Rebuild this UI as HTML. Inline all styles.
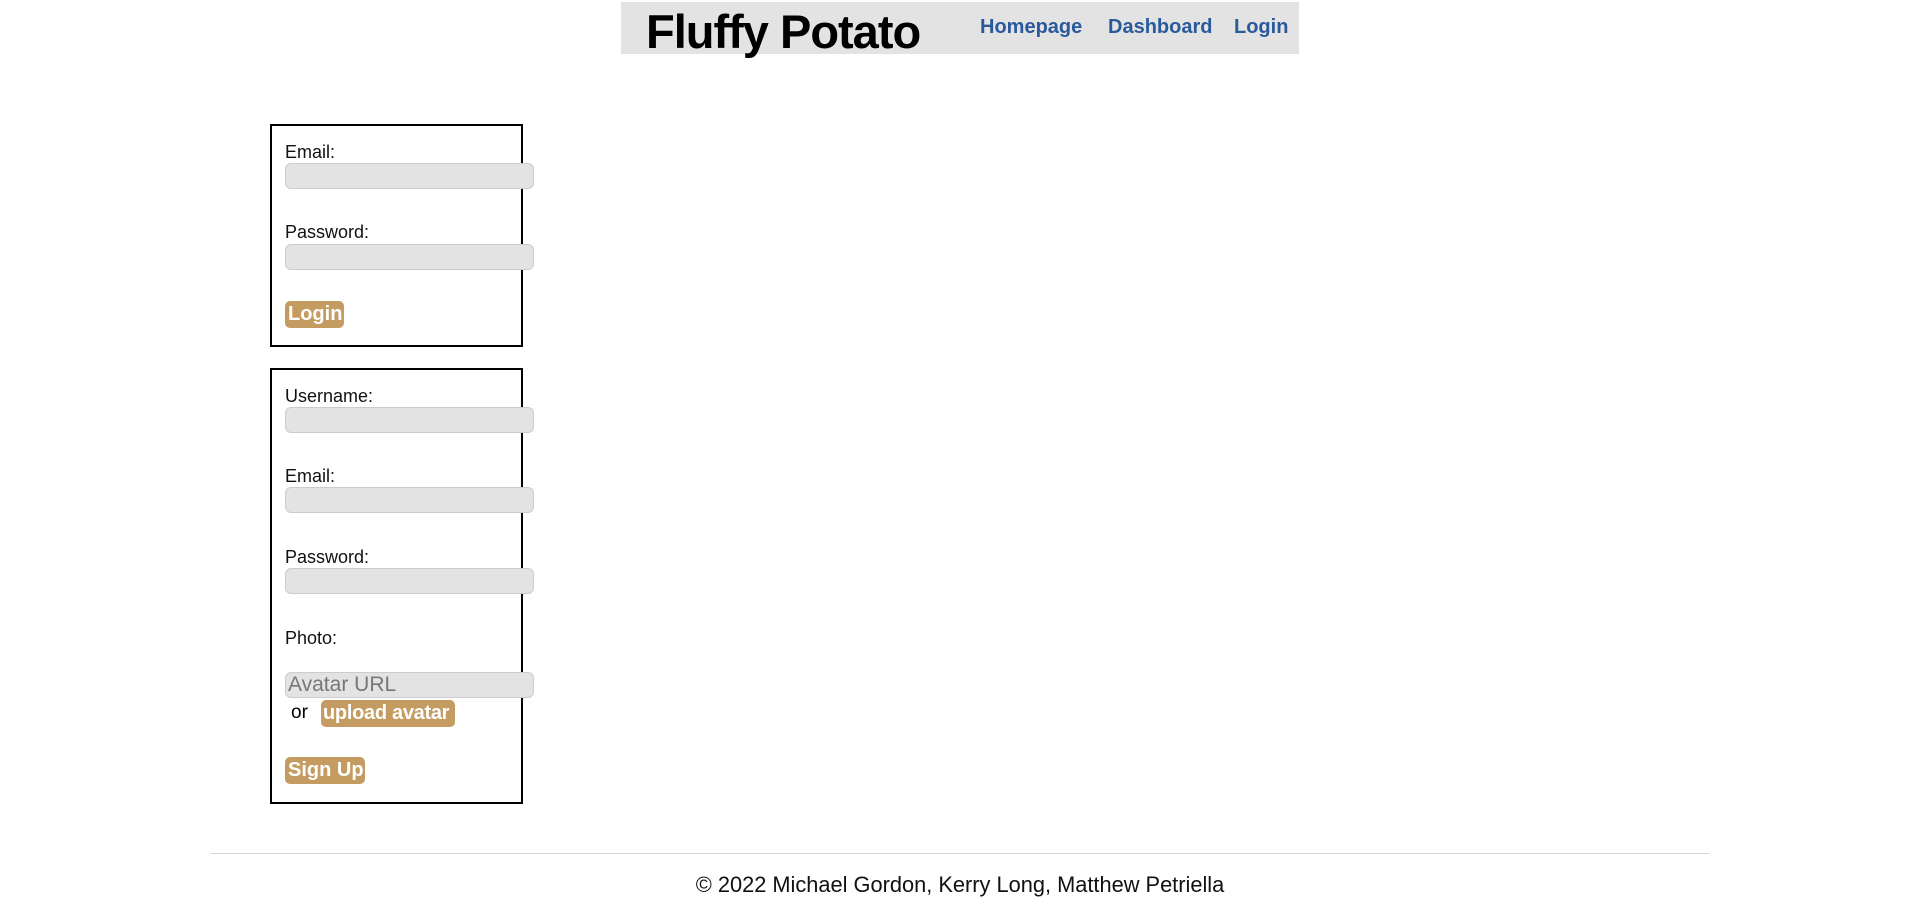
<!DOCTYPE html>
<html><head><meta charset="utf-8"><style>
body{margin:0;width:1920px;height:911px;background:#fff;font-family:"Liberation Sans",sans-serif;position:relative;overflow:hidden}
.a{position:absolute;white-space:nowrap}
.hdr{left:621px;top:2px;width:678px;height:52px;background:#e3e3e3}
.title{left:646px;top:2px;font-size:47px;font-weight:bold;line-height:60px;letter-spacing:-1px;color:#000}
.nav{top:14px;font-size:20px;font-weight:bold;color:#2a5a9c;line-height:26px}
.box{border:2px solid #000;left:270px;width:249px}
.lbl{left:285px;font-size:18px;line-height:22px;color:#111}
.inp{left:285px;width:249px;height:26px;background:#e3e3e3;border:1px solid #ccc;border-radius:6px;box-sizing:border-box}
.btn{background:#c49c62;color:#fff;font-weight:bold;font-size:20px;border-radius:5px;line-height:27px;padding:0 3px;box-sizing:border-box;height:27px}
</style></head><body>
<div class="a hdr"></div>
<div class="a title">Fluffy Potato</div>
<div class="a nav" style="left:980px">Homepage</div>
<div class="a nav" style="left:1108px">Dashboard</div>
<div class="a nav" style="left:1234px">Login</div>

<div class="a box" style="top:124px;height:219px"></div>
<div class="a lbl" style="top:141px">Email:</div>
<div class="a inp" style="top:163px"></div>
<div class="a lbl" style="top:221px">Password:</div>
<div class="a inp" style="top:244px"></div>
<div class="a btn" style="left:285px;top:301px;width:59px">Login</div>

<div class="a box" style="top:368px;height:432px"></div>
<div class="a lbl" style="top:385px">Username:</div>
<div class="a inp" style="top:407px"></div>
<div class="a lbl" style="top:465px">Email:</div>
<div class="a inp" style="top:487px"></div>
<div class="a lbl" style="top:546px">Password:</div>
<div class="a inp" style="top:568px"></div>
<div class="a lbl" style="top:627px">Photo:</div>
<div class="a inp" style="top:672px;color:#777;font-size:21px;line-height:24px;padding-left:2px">Avatar URL</div>
<div class="a" style="left:291px;top:702px;font-size:19px;line-height:22px">or</div>
<div class="a btn" style="left:321px;top:700px;width:134px;padding:0 2px;letter-spacing:-0.3px">upload avatar</div>
<div class="a btn" style="left:285px;top:757px;width:80px">Sign Up</div>

<div class="a" style="left:211px;top:853px;width:1498px;height:1px;background:#d4d4d4"></div>
<div class="a" style="left:0;width:1920px;text-align:center;top:872px;font-size:21.8px;line-height:26px;color:#111">© 2022 Michael Gordon, Kerry Long, Matthew Petriella</div>
</body></html>
